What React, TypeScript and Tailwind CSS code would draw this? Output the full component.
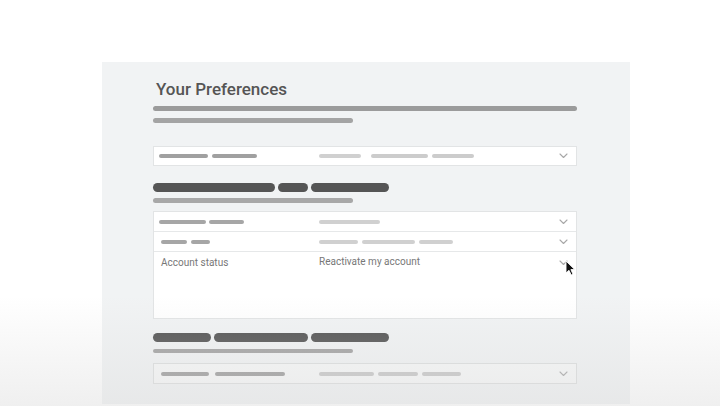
import React from "react";

function Chevron() {
  return (
    <svg width="9" height="6" viewBox="0 0 9 6" className="shrink-0">
      <path d="M1 1 L4.5 4.5 L8 1" fill="none" stroke="#a8a8a8" strokeWidth="1.1" strokeLinecap="round" strokeLinejoin="round" />
    </svg>
  );
}

export default function App() {
  return (
    <div
      className="relative w-[720px] h-[406px] bg-white overflow-hidden"
      style={{ fontFamily: "Roboto, 'Liberation Sans', sans-serif" }}
    >
      <div className="pt-[62px] pl-[102px]">
        <div className="w-[528px] h-[342px] bg-[#f1f3f4] pl-[51px] pr-[53px] pt-[17px]">
          <div className="text-[17px] leading-[20px] font-medium text-[#555] pl-[3px]">Your Preferences</div>
          <div className="mt-[7px] h-[5px] w-[424px] rounded-full bg-[#9b9b9b]" />
          <div className="mt-[7px] h-[5px] w-[200px] rounded-full bg-[#a4a4a4]" />

          {/* Row 1 */}
          <div className="mt-[23px] h-[20px] w-[424px] bg-white border border-[#e2e4e5] flex items-center pl-[5px] pr-[8px]">
            <div className="w-[160px] flex gap-[4px]">
              <div className="h-[4px] w-[49px] rounded-full bg-[#a0a0a0]" />
              <div className="h-[4px] w-[45px] rounded-full bg-[#a0a0a0]" />
            </div>
            <div className="flex-1 flex gap-[4px]">
              <div className="h-[4px] w-[42px] rounded-full bg-[#d0d0d0]" />
              <div className="h-[4px] w-[57px] ml-[6px] rounded-full bg-[#cccccc]" />
              <div className="h-[4px] w-[42px] rounded-full bg-[#cccccc]" />
            </div>
            <Chevron />
          </div>

          {/* Section 2 */}
          <div className="mt-[17px] flex gap-[3px]">
            <div className="h-[9px] w-[122px] rounded-full bg-[#555]" />
            <div className="h-[9px] w-[30px] rounded-full bg-[#555]" />
            <div className="h-[9px] w-[78px] rounded-full bg-[#555]" />
          </div>
          <div className="mt-[6px] h-[5px] w-[200px] rounded-full bg-[#a8a8a8]" />

          <div className="mt-[8px] w-[424px] bg-white border border-[#e2e4e5] flex flex-col">
            <div className="h-[20px] flex items-center pl-[5px] pr-[8px] border-b border-[#e6e8e9]">
              <div className="w-[160px] flex gap-[3px]">
                <div className="h-[4px] w-[47px] rounded-full bg-[#a6a6a6]" />
                <div className="h-[4px] w-[35px] rounded-full bg-[#a6a6a6]" />
              </div>
              <div className="flex-1 flex">
                <div className="h-[4px] w-[61px] rounded-full bg-[#d0d0d0]" />
              </div>
              <Chevron />
            </div>
            <div className="h-[20px] flex items-center pl-[7px] pr-[8px] border-b border-[#e6e8e9]">
              <div className="w-[158px] flex gap-[4px]">
                <div className="h-[4px] w-[26px] rounded-full bg-[#a6a6a6]" />
                <div className="h-[4px] w-[19px] rounded-full bg-[#a6a6a6]" />
              </div>
              <div className="flex-1 flex gap-[4px]">
                <div className="h-[4px] w-[39px] rounded-full bg-[#d0d0d0]" />
                <div className="h-[4px] w-[53px] rounded-full bg-[#d0d0d0]" />
                <div className="h-[4px] w-[34px] rounded-full bg-[#d0d0d0]" />
              </div>
              <Chevron />
            </div>
            <div className="relative h-[66px] flex items-start pl-[7px] pr-[8px] pt-[4px]">
              <div className="w-[158px] text-[10px] leading-[12px] text-[#777] pt-[1px]">Account status</div>
              <div className="flex-1 text-[10px] leading-[12px] text-[#777]">Reactivate my account</div>
              <div className="pt-[4px]"><Chevron /></div>
              <svg width="11" height="16" viewBox="0 0 11 16" className="absolute left-[411px] top-[8px]">
                <path d="M1 1 L1 13 L4 10.3 L6.2 15 L8 14.2 L5.9 9.6 L9.8 9.6 Z" fill="#111" stroke="#fff" strokeWidth="0.9" strokeLinejoin="round" />
              </svg>
            </div>
          </div>

          {/* Section 3 */}
          <div className="mt-[14px] flex gap-[3px]">
            <div className="h-[9px] w-[58px] rounded-full bg-[#505050]" />
            <div className="h-[9px] w-[94px] rounded-full bg-[#505050]" />
            <div className="h-[9px] w-[78px] rounded-full bg-[#505050]" />
          </div>
          <div className="mt-[7px] h-[4px] w-[200px] rounded-full bg-[#a0a0a0]" />

          <div className="mt-[10px] h-[21px] w-[424px] bg-[#f7f8f8] border border-[#dcdede] flex items-center pl-[7px] pr-[8px]">
            <div className="w-[158px] flex gap-[6px]">
              <div className="h-[4px] w-[48px] rounded-full bg-[#9a9a9a]" />
              <div className="h-[4px] w-[70px] rounded-full bg-[#9a9a9a]" />
            </div>
            <div className="flex-1 flex gap-[4px]">
              <div className="h-[4px] w-[55px] rounded-full bg-[#c6c6c6]" />
              <div className="h-[4px] w-[40px] rounded-full bg-[#c6c6c6]" />
              <div className="h-[4px] w-[39px] rounded-full bg-[#c6c6c6]" />
            </div>
            <Chevron />
          </div>
        </div>
      </div>
      <div className="pointer-events-none absolute left-0 right-0 bottom-0 h-[110px] bg-gradient-to-b from-transparent to-[#d8d8d8]/40" />
    </div>
  );
}
